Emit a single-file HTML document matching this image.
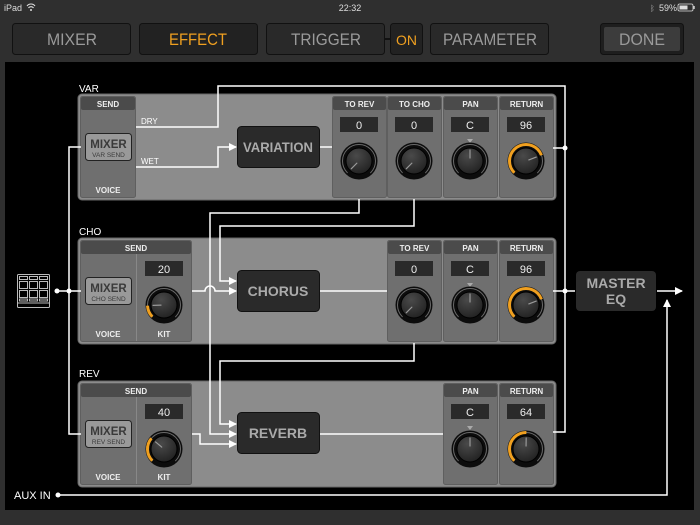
<!DOCTYPE html>
<html><head><meta charset="utf-8"><style>
html,body{margin:0;padding:0;background:#2f2f2f;width:700px;height:525px;overflow:hidden}
svg{display:block}
text{font-family:"Liberation Sans",sans-serif}
</style></head><body>
<svg width="700" height="525" viewBox="0 0 700 525" xmlns="http://www.w3.org/2000/svg">
<defs>
<radialGradient id="kg" cx="0.4" cy="0.3" r="0.8"><stop offset="0" stop-color="#4a4a4a"/><stop offset="1" stop-color="#1e1e1e"/></radialGradient>
<g id="kb"><circle r="18.5" fill="#0c0c0c"/><circle r="16.5" fill="none" stroke="#6a6a6a" stroke-width="1" stroke-dasharray="77.8 200" transform="rotate(-225)"/><circle r="13" fill="url(#kg)" stroke="#000" stroke-width="1"/></g>
<marker id="ar" markerWidth="8" markerHeight="8" refX="7" refY="4" orient="auto" markerUnits="userSpaceOnUse"><path d="M0,0 L8,4 L0,8z" fill="#fff"/></marker>
</defs>
<rect width="700" height="525" fill="#2f2f2f"/>
<text x="4" y="11" font-size="9" fill="#ddd">iPad</text>
<path d="M27,6 a5,5 0 0 1 8,0 M28.5,8 a3,3 0 0 1 5,0" stroke="#ddd" fill="none" stroke-width="1.1"/><circle cx="31" cy="10" r="1" fill="#ddd"/>
<text x="350" y="11" font-size="9" fill="#ddd" text-anchor="middle">22:32</text>
<text x="650" y="11" font-size="8" fill="#aaa">ᛒ</text>
<text x="659" y="11" font-size="9" fill="#ddd">59%</text>
<rect x="678" y="4" width="15" height="7" rx="1.5" fill="none" stroke="#ddd" stroke-width="0.8"/><rect x="679.5" y="5.5" width="8" height="4" fill="#ddd"/><rect x="693.5" y="6" width="1.2" height="3" fill="#ddd"/>
<g font-size="17" text-anchor="middle">
<rect x="12.5" y="23.5" width="118" height="31" rx="3" fill="#292929" stroke="#111"/><text x="72" y="45" fill="#9a9a9a" textLength="50" lengthAdjust="spacingAndGlyphs">MIXER</text>
<rect x="139.5" y="23.5" width="118" height="31" rx="3" fill="#222" stroke="#111"/><text x="198" y="45" fill="#f0a020" textLength="58" lengthAdjust="spacingAndGlyphs">EFFECT</text>
<rect x="266.5" y="23.5" width="118" height="31" rx="3" fill="#292929" stroke="#111"/><text x="326" y="45" fill="#9a9a9a" textLength="70" lengthAdjust="spacingAndGlyphs">TRIGGER</text>
<rect x="384" y="38" width="8" height="2" fill="#111"/>
<rect x="390.5" y="23.5" width="32" height="31" rx="3" fill="#222" stroke="#111"/><text x="406.5" y="45" fill="#f0a020" font-size="14">ON</text>
<rect x="430.5" y="23.5" width="118" height="31" rx="3" fill="#292929" stroke="#111"/><text x="490" y="45" fill="#9a9a9a" textLength="94" lengthAdjust="spacingAndGlyphs">PARAMETER</text>
<rect x="600.5" y="23.5" width="83" height="31" rx="3" fill="#1e1e1e" stroke="#111"/><rect x="604" y="27" width="76" height="24" rx="2" fill="#3c3c3c"/><text x="642" y="45" fill="#9a9a9a" textLength="46" lengthAdjust="spacingAndGlyphs">DONE</text>
</g>
<rect x="5" y="62" width="689" height="448" fill="#000"/>
<g font-size="10" fill="#fff"><text x="79" y="92">VAR</text><text x="79" y="235">CHO</text><text x="79" y="377">REV</text></g>
<g>
<rect x="78" y="94" width="478" height="106" rx="4" fill="#8c8c8c" stroke="#666"/>
<rect x="78" y="238" width="478" height="106" rx="4" fill="#8c8c8c" stroke="#666"/>
<rect x="78" y="381" width="478" height="106" rx="4" fill="#8c8c8c" stroke="#666"/>
</g>
<g fill="#6f6f6f" stroke="#5f5f5f" stroke-width="1">
<rect x="80.5" y="96.5" width="55" height="101" rx="2"/>
<rect x="332.5" y="96.5" width="54" height="101" rx="2"/><rect x="387.5" y="96.5" width="54" height="101" rx="2"/><rect x="443.5" y="96.5" width="54" height="101" rx="2"/><rect x="499.5" y="96.5" width="54" height="101" rx="2"/>
<rect x="80.5" y="240.5" width="111" height="101" rx="2"/>
<rect x="387.5" y="240.5" width="54" height="101" rx="2"/><rect x="443.5" y="240.5" width="54" height="101" rx="2"/><rect x="499.5" y="240.5" width="54" height="101" rx="2"/>
<rect x="80.5" y="383.5" width="111" height="101" rx="2"/>
<rect x="443.5" y="383.5" width="54" height="101" rx="2"/><rect x="499.5" y="383.5" width="54" height="101" rx="2"/>
</g>
<g stroke="#888" stroke-width="1"><line x1="136.5" y1="254" x2="136.5" y2="341"/><line x1="136.5" y1="397" x2="136.5" y2="484"/></g>
<g fill="#4b4b4b">
<rect x="81" y="97" width="54" height="13" rx="2"/>
<rect x="333" y="97" width="53" height="13" rx="2"/><rect x="388" y="97" width="53" height="13" rx="2"/><rect x="444" y="97" width="53" height="13" rx="2"/><rect x="500" y="97" width="53" height="13" rx="2"/>
<rect x="81" y="241" width="110" height="13" rx="2"/>
<rect x="388" y="241" width="53" height="13" rx="2"/><rect x="444" y="241" width="53" height="13" rx="2"/><rect x="500" y="241" width="53" height="13" rx="2"/>
<rect x="81" y="384" width="110" height="13" rx="2"/>
<rect x="444" y="384" width="53" height="13" rx="2"/><rect x="500" y="384" width="53" height="13" rx="2"/>
</g>
<g font-size="8" font-weight="bold" fill="#eee" text-anchor="middle">
<text x="108" y="107">SEND</text><text x="359.5" y="107">TO REV</text><text x="414.5" y="107">TO CHO</text><text x="470.5" y="107">PAN</text><text x="526.5" y="107">RETURN</text>
<text x="136" y="251">SEND</text><text x="414.5" y="251">TO REV</text><text x="470.5" y="251">PAN</text><text x="526.5" y="251">RETURN</text>
<text x="136" y="394">SEND</text><text x="470.5" y="394">PAN</text><text x="526.5" y="394">RETURN</text>
<text x="108" y="193">VOICE</text><text x="108" y="337">VOICE</text><text x="164" y="337">KIT</text>
<text x="108" y="480">VOICE</text><text x="164" y="480">KIT</text>
</g>
<g>
<rect x="85.5" y="133.5" width="46" height="27" rx="3" fill="#999" stroke="#222"/>
<rect x="85.5" y="277.5" width="46" height="27" rx="3" fill="#999" stroke="#222"/>
<rect x="85.5" y="420.5" width="46" height="27" rx="3" fill="#999" stroke="#222"/>
</g>
<g text-anchor="middle" fill="#3a3a3a">
<text x="108.5" y="148" font-size="11.5" font-weight="bold">MIXER</text><text x="108.5" y="157" font-size="6.5">VAR SEND</text>
<text x="108.5" y="292" font-size="11.5" font-weight="bold">MIXER</text><text x="108.5" y="301" font-size="6.5">CHO SEND</text>
<text x="108.5" y="435" font-size="11.5" font-weight="bold">MIXER</text><text x="108.5" y="444" font-size="6.5">REV SEND</text>
</g>
<g fill="#2a2a2a">
<rect x="340" y="117" width="38" height="15"/><rect x="395" y="117" width="38" height="15"/><rect x="451" y="117" width="38" height="15"/><rect x="507" y="117" width="38" height="15"/>
<rect x="145" y="261" width="38" height="15"/><rect x="395" y="261" width="38" height="15"/><rect x="451" y="261" width="38" height="15"/><rect x="507" y="261" width="38" height="15"/>
<rect x="145" y="404" width="38" height="15"/><rect x="451" y="404" width="38" height="15"/><rect x="507" y="404" width="38" height="15"/>
</g>
<g font-size="11" fill="#eee" text-anchor="middle">
<text x="359" y="129">0</text><text x="414" y="129">0</text><text x="470" y="129">C</text><text x="526" y="129">96</text>
<text x="164" y="273">20</text><text x="414" y="273">0</text><text x="470" y="273">C</text><text x="526" y="273">96</text>
<text x="164" y="416">40</text><text x="470" y="416">C</text><text x="526" y="416">64</text>
</g>
<g fill="#aaa"><path d="M467,139 h6 l-3,4z"/><path d="M467,283 h6 l-3,4z"/><path d="M467,426 h6 l-3,4z"/></g>
<g stroke-linecap="round">
<g transform="translate(359,161)"><use href="#kb"/><line y1="-3" y2="-11" stroke="#999" stroke-width="1.2" transform="rotate(-135)"/></g>
<g transform="translate(414,161)"><use href="#kb"/><line y1="-3" y2="-11" stroke="#999" stroke-width="1.2" transform="rotate(-135)"/></g>
<g transform="translate(470,161)"><use href="#kb"/><line y1="-3" y2="-11" stroke="#999" stroke-width="1.2"/></g>
<g transform="translate(526,161)"><use href="#kb"/><circle r="16.5" fill="none" stroke="#f0a020" stroke-width="3" stroke-dasharray="58.8 200" transform="rotate(-225)" stroke-linecap="butt"/><circle r="13" fill="url(#kg)" stroke="#000"/><line y1="-3" y2="-11" stroke="#999" stroke-width="1.2" transform="rotate(69)"/></g>
<g transform="translate(164,305)"><use href="#kb"/><circle r="16.5" fill="none" stroke="#f0a020" stroke-width="3" stroke-dasharray="12.3 200" transform="rotate(-225)" stroke-linecap="butt"/><circle r="13" fill="url(#kg)" stroke="#000"/><line y1="-3" y2="-11" stroke="#999" stroke-width="1.2" transform="rotate(-92)"/></g>
<g transform="translate(414,305)"><use href="#kb"/><line y1="-3" y2="-11" stroke="#999" stroke-width="1.2" transform="rotate(-135)"/></g>
<g transform="translate(470,305)"><use href="#kb"/><line y1="-3" y2="-11" stroke="#999" stroke-width="1.2"/></g>
<g transform="translate(526,305)"><use href="#kb"/><circle r="16.5" fill="none" stroke="#f0a020" stroke-width="3" stroke-dasharray="58.8 200" transform="rotate(-225)" stroke-linecap="butt"/><circle r="13" fill="url(#kg)" stroke="#000"/><line y1="-3" y2="-11" stroke="#999" stroke-width="1.2" transform="rotate(69)"/></g>
<g transform="translate(164,449)"><use href="#kb"/><circle r="16.5" fill="none" stroke="#f0a020" stroke-width="3" stroke-dasharray="24.5 200" transform="rotate(-225)" stroke-linecap="butt"/><circle r="13" fill="url(#kg)" stroke="#000"/><line y1="-3" y2="-11" stroke="#999" stroke-width="1.2" transform="rotate(-50)"/></g>
<g transform="translate(470,449)"><use href="#kb"/><line y1="-3" y2="-11" stroke="#999" stroke-width="1.2"/></g>
<g transform="translate(526,449)"><use href="#kb"/><circle r="16.5" fill="none" stroke="#f0a020" stroke-width="3" stroke-dasharray="39.2 200" transform="rotate(-225)" stroke-linecap="butt"/><circle r="13" fill="url(#kg)" stroke="#000"/><line y1="-3" y2="-11" stroke="#999" stroke-width="1.2" transform="rotate(1)"/></g>
</g>
<g stroke="#fff" stroke-width="1.5" fill="none">
<path d="M136,127 H218 V86 H565 V432 H553"/>
<path d="M136,167 H218 V147 H236" marker-end="url(#ar)"/>
<path d="M553,148 H565"/><path d="M553,291 H575"/>
<path d="M319,147 H332"/><path d="M319,291 H387"/><path d="M319,434 H443"/>
<path d="M359,199 V213 H210 V434 H236" marker-end="url(#ar)"/>
<path d="M414,199 V226 H220 V281 H236" marker-end="url(#ar)"/>
<path d="M414,343 V361 H220 V424 H236" marker-end="url(#ar)"/>
<path d="M192,434 H200 V444 H236" marker-end="url(#ar)"/>
<path d="M192,291 H205 A5,5 0 0 1 215,291 H236" marker-end="url(#ar)"/>
<path d="M81,147 H69 V434 H81"/>
<path d="M57,291 H81"/>
<path d="M657,291 H682" marker-end="url(#ar)"/>
<path d="M58,495 H667 V300" marker-end="url(#ar)"/>
</g>
<g fill="#fff"><circle cx="565" cy="148" r="2.5"/><circle cx="565" cy="291" r="2.5"/><circle cx="57" cy="291" r="2.5"/><circle cx="69" cy="291" r="2.5"/><circle cx="58" cy="495" r="2.5"/></g>
<text x="14" y="499" font-size="11" fill="#fff">AUX IN</text>
<g>
<rect x="237.5" y="126.5" width="82" height="41" rx="4" fill="#2a2a2a" stroke="#111"/>
<rect x="237.5" y="270.5" width="82" height="41" rx="4" fill="#2a2a2a" stroke="#111"/>
<rect x="237.5" y="412.5" width="82" height="41" rx="4" fill="#2a2a2a" stroke="#111"/>
<rect x="576" y="271" width="80" height="40" rx="4" fill="#2a2a2a"/>
</g>
<g font-size="14" font-weight="bold" fill="#aaa" text-anchor="middle">
<text x="278" y="152" textLength="70" lengthAdjust="spacingAndGlyphs">VARIATION</text><text x="278" y="296">CHORUS</text><text x="278" y="438">REVERB</text>
<text x="616" y="288">MASTER</text><text x="616" y="304">EQ</text>
</g>
<g font-size="8" fill="#fff"><text x="141" y="124">DRY</text><text x="141" y="164">WET</text></g>
<g stroke="#bbb" fill="none" stroke-width="1">
<rect x="17.5" y="274.5" width="32" height="33" rx="1"/>
<line x1="18" y1="303" x2="49" y2="303"/>
<rect x="19.5" y="276.5" width="8" height="3"/><rect x="29.5" y="276.5" width="8" height="3"/><rect x="39.5" y="276.5" width="8" height="3"/>
<rect x="19.5" y="281.5" width="8" height="7"/><rect x="29.5" y="281.5" width="8" height="7"/><rect x="39.5" y="281.5" width="8" height="7"/>
<rect x="19.5" y="290.5" width="8" height="7"/><rect x="29.5" y="290.5" width="8" height="7"/><rect x="39.5" y="290.5" width="8" height="7"/>
<rect x="19.5" y="299" width="8" height="2"/><rect x="29.5" y="299" width="8" height="2"/><rect x="39.5" y="299" width="8" height="2"/>
</g>
</svg>
</body></html>
